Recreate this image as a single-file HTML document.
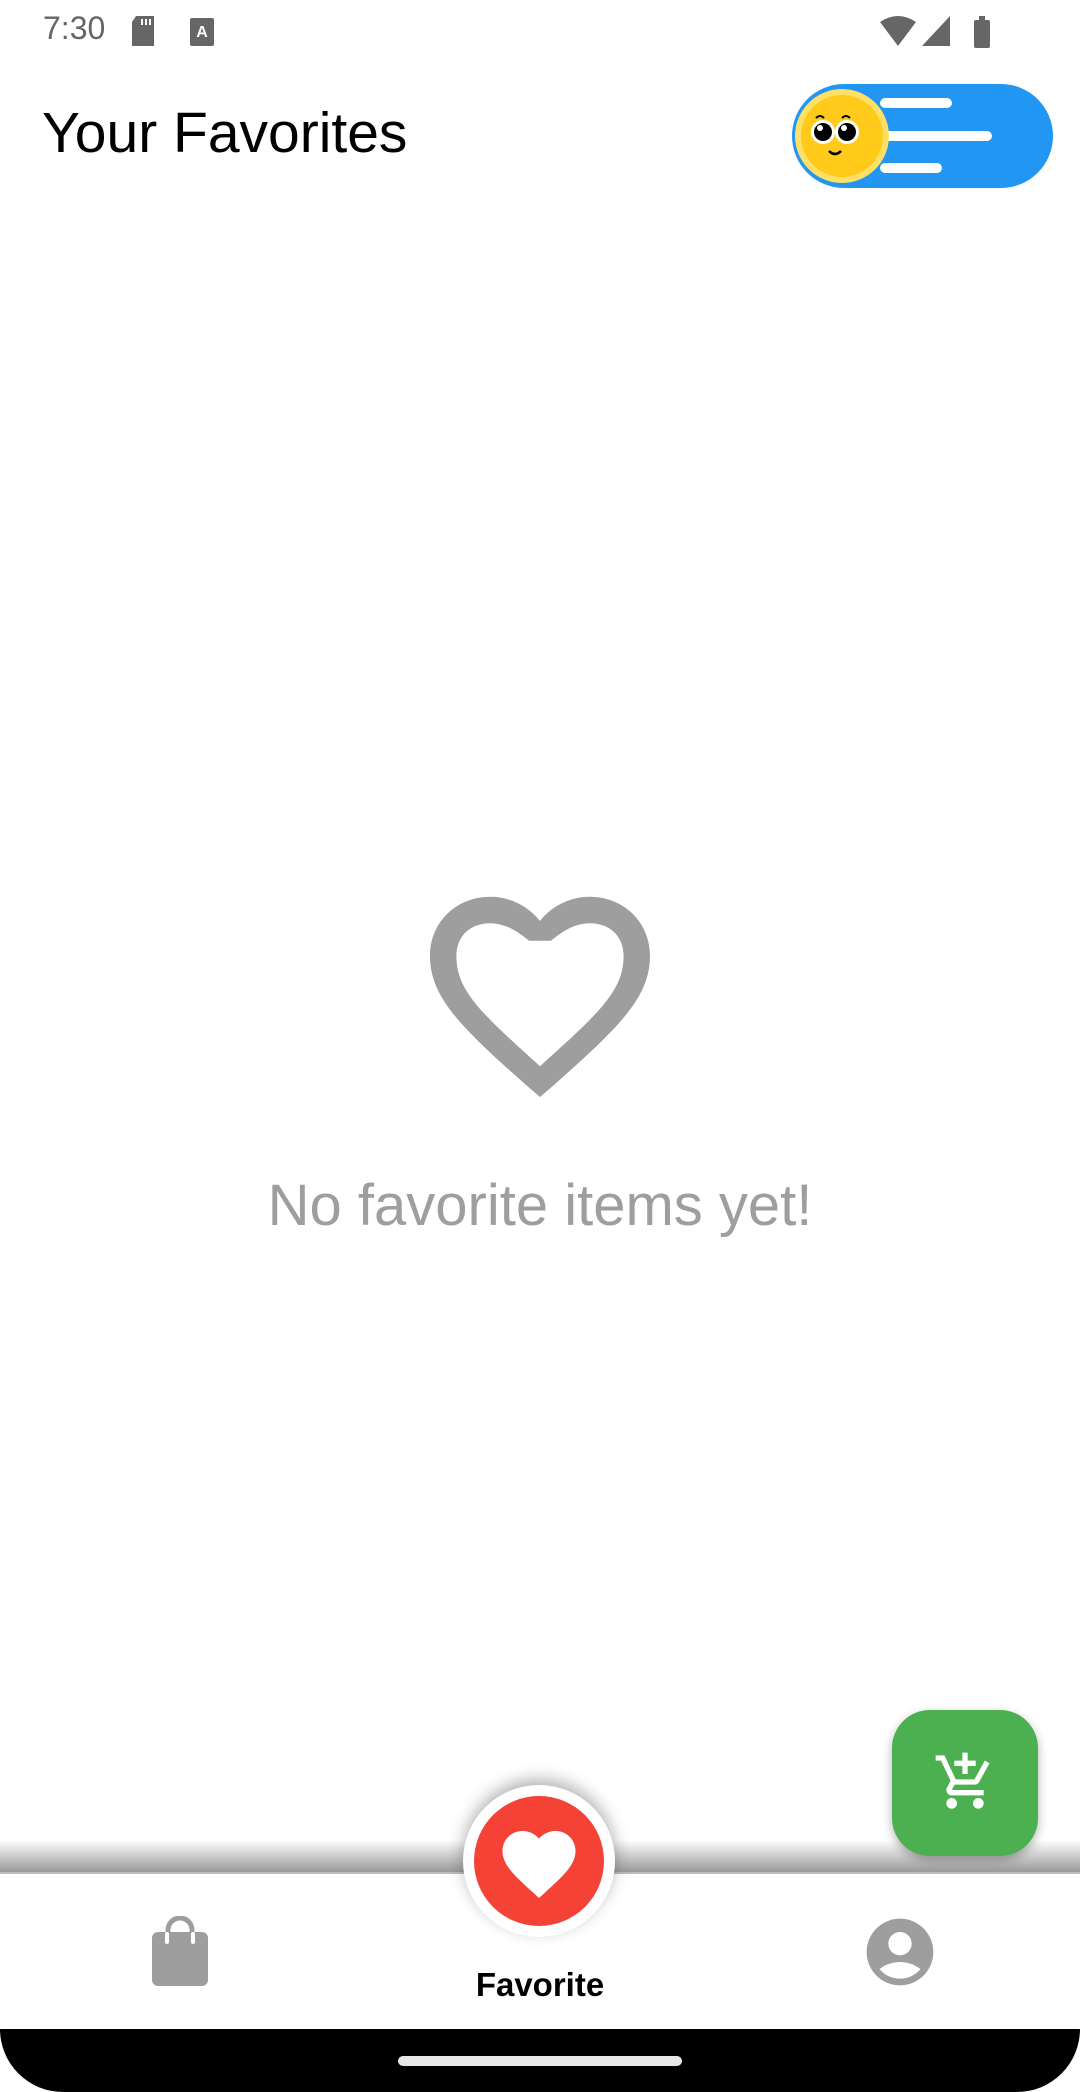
<!DOCTYPE html>
<html><head><meta charset="utf-8"><style>
*{margin:0;padding:0;box-sizing:border-box}
body{width:1080px;height:2092px;background:#fff;position:relative;overflow:hidden;font-family:"Liberation Sans",sans-serif}
.abs{position:absolute}
</style></head><body>
<div class="abs" style="left:43px;top:10px;font-size:32px;color:#666;">7:30</div>
<svg class="abs" style="left:128px;top:14px" width="30" height="34" viewBox="0 0 30 34"><path d="M8 2h18v30H4V8z" fill="#666"/><rect x="13" y="5" width="2" height="6" fill="#fff"/><rect x="17" y="5" width="2" height="6" fill="#fff"/><rect x="21" y="5" width="2" height="6" fill="#fff"/></svg>
<svg class="abs" style="left:190px;top:18px" width="24" height="28" viewBox="0 0 24 28"><rect width="24" height="28" rx="2" fill="#666"/><text x="12" y="19" font-size="16" font-weight="bold" fill="#fff" text-anchor="middle" font-family="Liberation Sans">A</text></svg>
<svg class="abs" style="left:878px;top:14px" width="118" height="34" viewBox="0 0 118 34"><path d="M2 8Q20-4 38 8L20 32z" fill="#666"/><path d="M72 2V32H44z" fill="#666"/><rect x="96" y="6" width="16" height="28" rx="2" fill="#666"/><rect x="101" y="2" width="6" height="5" fill="#666"/></svg>
<div class="abs" style="left:42px;top:100px;font-size:57px;color:#000;">Your Favorites</div>
<div class="abs" style="left:792px;top:84px;width:261px;height:104px;border-radius:52px;background:#2196F3"></div>
<div class="abs" style="left:880px;top:98px;width:72px;height:10px;border-radius:5px;background:#fff"></div>
<div class="abs" style="left:880px;top:131px;width:112px;height:10px;border-radius:5px;background:#fff"></div>
<div class="abs" style="left:880px;top:163px;width:62px;height:10px;border-radius:5px;background:#fff"></div>
<svg class="abs" style="left:794px;top:88px" width="96" height="96" viewBox="0 0 96 96"><circle cx="48" cy="48" r="47" fill="#FFE066"/><circle cx="48" cy="48" r="41" fill="#FFCA1A"/><circle cx="29" cy="44" r="12" fill="#fff"/><circle cx="53" cy="44" r="12" fill="#fff"/><circle cx="29" cy="44" r="9" fill="#000"/><circle cx="53" cy="44" r="9" fill="#000"/><circle cx="26" cy="40" r="3" fill="#fff"/><circle cx="50" cy="40" r="3" fill="#fff"/><path d="M35 63q6 6 12 0" stroke="#000" stroke-width="2.5" fill="none"/><path d="M22 30q4-4 8 0M48 30q4-4 8 0" stroke="#000" stroke-width="2" fill="none"/></svg>
<svg class="abs" style="left:419px;top:888px" width="242" height="220" viewBox="0 0 220 200"><path d="M110 190 L96 178 C40 128 10 100 10 62 10 31 34 8 65 8 82 8 99 16 110 30 121 16 138 8 155 8 186 8 210 31 210 62 210 100 180 128 124 178Z M110 162 C162 115 186 94 186 62 186 44 174 32 155 32 141 32 128 41 120 48 H100 C92 41 79 32 65 32 46 32 34 44 34 62 34 94 58 115 110 162Z" fill="#9e9e9e" fill-rule="evenodd"/></svg>
<div class="abs" style="left:0;width:1080px;top:1172px;text-align:center;font-size:58px;color:#9e9e9e;">No favorite items yet!</div>
<div class="abs" style="left:0;top:1840px;width:1080px;height:32px;background:linear-gradient(to bottom,rgba(0,0,0,0),rgba(0,0,0,0.4))"></div>
<div class="abs" style="left:0;top:1872px;width:1080px;height:160px;background:#fff;border-top:2px solid #bbb"></div>
<div class="abs" style="left:892px;top:1710px;width:146px;height:146px;border-radius:38px;background:#4CAF50;box-shadow:0 4px 10px rgba(0,0,0,.3)"></div>
<svg class="abs" style="left:933px;top:1750px" width="64" height="64" viewBox="0 0 24 24"><path d="M11 9h2V6h3V4h-3V1h-2v3H8v2h3v3zm-4 9c-1.1 0-2 .9-2 2s.9 2 2 2 2-.9 2-2-.9-2-2-2zm10 0c-1.1 0-2 .9-2 2s.9 2 2 2 2-.9 2-2-.9-2-2-2zm-9.8-3.3l.03-.12.9-1.58h7.45c.75 0 1.41-.41 1.75-1.03l3.86-7.01L19.420 4l-3.87 7H8.53L4.27 2H1v2h2l3.6 7.59-1.35 2.44C4.52 15.370 5.48 17 7 17h12v-2H7.42c-.13 0-.25-.11-.25-.25z" fill="#fff"/></svg>
<div class="abs" style="left:463px;top:1785px;width:152px;height:152px;border-radius:50%;background:#fff;box-shadow:0 -6px 16px rgba(0,0,0,.3)"></div>
<div class="abs" style="left:474px;top:1796px;width:130px;height:130px;border-radius:50%;background:#F44336"></div>
<svg class="abs" style="left:495px;top:1820px" width="88" height="84" viewBox="0 0 24 23"><path d="M12 21.35l-1.45-1.32C5.4 15.36 2 12.28 2 8.5 2 5.42 4.42 3 7.5 3c1.74 0 3.41.81 4.5 2.09C13.090 3.81 14.76 3 16.5 3 19.58 3 22 5.42 22 8.5c0 3.78-3.4 6.86-8.55 11.54L12 21.35z" fill="#fff"/></svg>
<div class="abs" style="left:0;width:1080px;top:1966px;text-align:center;font-size:33px;font-weight:bold;color:#000;">Favorite</div>
<svg class="abs" style="left:150px;top:1916px" width="60" height="72" viewBox="0 0 60 72"><path d="M18 18V14a12 12 0 0 1 24 0v4" stroke="#9e9e9e" stroke-width="5" fill="none"/><rect x="2" y="16" width="56" height="54" rx="6" fill="#9e9e9e"/><rect x="15" y="16" width="4" height="12" rx="2" fill="#fff"/><rect x="41" y="16" width="4" height="12" rx="2" fill="#fff"/></svg>
<svg class="abs" style="left:860px;top:1912px" width="80" height="80" viewBox="0 0 24 24"><path d="M12 2C6.48 2 2 6.48 2 12s4.48 10 10 10 10-4.48 10-10S17.52 2 12 2zm0 4c1.93 0 3.5 1.57 3.5 3.5S13.93 13 12 13s-3.5-1.57-3.5-3.5S10.07 6 12 6zm0 14c-2.03 0-4.43-.82-6.14-2.88C7.55 15.8 9.68 15 12 15s4.45.8 6.14 2.12C16.43 19.18 14.03 20 12 20z" fill="#9e9e9e"/></svg>
<div class="abs" style="left:0;top:2029px;width:1080px;height:63px;background:#000;border-radius:0 0 70px 70px"></div>
<div class="abs" style="left:398px;top:2056px;width:284px;height:10px;border-radius:5px;background:#e8e8e8"></div>
</body></html>
